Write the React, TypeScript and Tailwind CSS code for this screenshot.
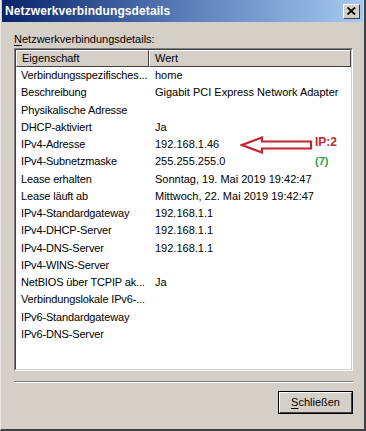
import React from "react";

const rows: [string, string][] = [
  ["Verbindungsspezifisches...", "home"],
  ["Beschreibung", "Gigabit PCI Express Network Adapter"],
  ["Physikalische Adresse", ""],
  ["DHCP-aktiviert", "Ja"],
  ["IPv4-Adresse", "192.168.1.46"],
  ["IPv4-Subnetzmaske", "255.255.255.0"],
  ["Lease erhalten", "Sonntag, 19. Mai 2019 19:42:47"],
  ["Lease läuft ab", "Mittwoch, 22. Mai 2019 19:42:47"],
  ["IPv4-Standardgateway", "192.168.1.1"],
  ["IPv4-DHCP-Server", "192.168.1.1"],
  ["IPv4-DNS-Server", "192.168.1.1"],
  ["IPv4-WINS-Server", ""],
  ["NetBIOS über TCPIP ak...", "Ja"],
  ["Verbindungslokale IPv6-...", ""],
  ["IPv6-Standardgateway", ""],
  ["IPv6-DNS-Server", ""],
];

export default function App() {
  return (
    <div
      className="w-[366px] h-[431px] bg-[#d4d0c8] border-r-2 border-b-2 border-r-[#404040] border-b-[#404040] border-l border-l-[#e8e6e0] flex flex-col text-[11px] text-black overflow-hidden"
      style={{ fontFamily: '"Liberation Sans", Arial, sans-serif' }}
    >
      {/* Title bar */}
      <div className="h-[22px] mx-[1px] flex items-center justify-between pl-[3px] pr-[3px] bg-gradient-to-r from-[#0a246a] via-[#5a7cb8] to-[#a6caf0]">
        <span className="text-white font-bold text-[12px] tracking-[0.1px]">Netzwerkverbindungsdetails</span>
        <button className="w-[17px] h-[15px] bg-[#d4d0c8] border border-t-white border-l-white border-r-[#404040] border-b-[#404040] flex items-center justify-center">
          <svg width="9" height="8" viewBox="0 0 9 8">
            <path d="M0.5 0.5 L8 7.5 M8 0.5 L0.5 7.5" stroke="#000" strokeWidth="1.8" />
          </svg>
        </button>
      </div>

      <div className="flex-1 flex flex-col pl-[13px] pr-[11px]">
        <div className="mt-[10px] h-[15px] leading-[15px]">
          <span className="underline underline-offset-2">N</span>etzwerkverbindungsdetails:
        </div>

        {/* List view */}
        <div className="mt-[1px] h-[323px] border border-t-[#808080] border-l-[#808080] border-r-white border-b-white">
          <div className="h-full border border-t-[#404040] border-l-[#404040] border-r-[#d4d0c8] border-b-[#d4d0c8] bg-white flex flex-col relative">
            <div className="flex h-[17px] bg-[#d4d0c8] shrink-0">
              <div className="w-[133px] border border-t-white border-l-white border-r-[#404040] border-b-[#404040] pl-[5px] leading-[14px]">
                Eigenschaft
              </div>
              <div className="flex-1 border border-t-white border-l-white border-r-[#404040] border-b-[#404040] pl-[5px] leading-[14px]">
                Wert
              </div>
            </div>
            <div className="flex flex-col">
              {rows.map(([k, v], i) => (
                <div key={i} className="flex h-[17.27px] leading-[17px] whitespace-nowrap">
                  <div className="w-[133px] pl-[5px] tracking-[-0.15px] overflow-hidden">{k}</div>
                  <div className="flex-1 pl-[6px]">{v}</div>
                </div>
              ))}
            </div>

            {/* Annotation */}
            <div className="absolute left-[224px] top-[86px] flex items-start">
              <svg width="74" height="18" viewBox="0 0 74 18">
                <path
                  d="M2 9 L22 1.5 L22 5.5 L71 5.5 L71 12.5 L22 12.5 L22 16.5 Z"
                  fill="none"
                  stroke="#c0272d"
                  strokeWidth="2.2"
                  strokeLinejoin="miter"
                />
              </svg>
              <div className="ml-[1px] flex flex-col">
                <span className="text-[#c0272d] font-bold text-[12px] leading-[14px] -mt-[1px]">IP:2</span>
                <span className="text-[#2e9e3e] font-bold text-[11px] leading-[13px] mt-[6px]">(7)</span>
              </div>
            </div>
          </div>
        </div>

        {/* Separator */}
        <div className="mt-[10px] h-[2px] border-t border-t-[#808080] border-b border-b-white" />

        <div className="flex justify-end mt-[8px]">
          <button className="w-[75px] h-[23px] border border-black">
            <div className="w-full h-full border border-t-white border-l-white border-r-[#404040] border-b-[#404040] flex items-center justify-center">
              <span>
                <span className="underline underline-offset-2">S</span>chließen
              </span>
            </div>
          </button>
        </div>
      </div>
    </div>
  );
}
